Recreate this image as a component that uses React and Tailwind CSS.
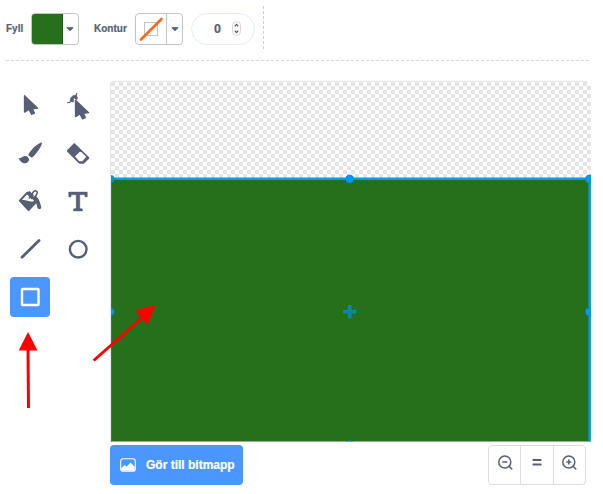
import React from "react";

const INK = "#575e75";

const Caret = () => (
  <svg width="8" height="5" viewBox="0 0 8 5" className="block">
    <path d="M1 .7h6L4 3.7z" fill={INK} stroke={INK} strokeWidth="1" strokeLinejoin="round" />
  </svg>
);

function Swatch({ children }) {
  return (
    <div className="flex h-8 w-12 overflow-hidden rounded-[4px] border border-[#c4c4c4]">
      <div className="flex w-[30px] items-center justify-center">{children}</div>
      <div className="flex flex-1 items-center justify-center border-l border-[#c4c4c4] pt-px">
        <Caret />
      </div>
    </div>
  );
}

function Header() {
  return (
    <div className="ml-[6px] flex h-[61px] w-[584px] items-start pt-[6px]">
      <div className="flex h-[45px] w-[258px] items-center">
        <span className="w-[24.5px] text-[10px] font-bold [-webkit-text-stroke:0.2px]">Fyll</span>
        <div className="flex h-8 w-12 overflow-hidden rounded-[4px] border border-[#c4c4c4]">
          <div className="-my-px -ml-px w-8 rounded-l-[4px] border border-[#1f6114] bg-[#26701b]" />
          <div className="flex flex-1 items-center justify-center pt-px">
            <Caret />
          </div>
        </div>
        <span className="ml-[15.5px] w-[41px] text-[10px] font-bold [-webkit-text-stroke:0.2px]">Kontur</span>
        <Swatch>
          <svg width="28" height="28" viewBox="0 0 28 28">
            <rect x="7.5" y="7.5" width="13" height="13" fill="none" stroke="#c4c4c4" />
            <path d="M4 24.5 24.5 4" stroke="#ff661a" strokeWidth="2.6" strokeLinecap="round" />
          </svg>
        </Swatch>
        <div className="ml-2 flex h-8 w-16 items-center rounded-full border border-[#e6edf7] pl-[22px]">
          <span className="w-[18px] pt-px text-[12.5px] font-bold [-webkit-text-stroke:0.2px]">0</span>
          <svg width="9" height="15" viewBox="0 0 9 15">
            <rect x=".5" y=".5" width="8" height="14" rx="4" fill="#fff" stroke="#d5d5d5" />
            <path d="m2.7 5.3 1.8-2 1.8 2M2.7 9.7l1.8 2 1.8-2" fill="none" stroke="#4c4c4c" strokeWidth="1.1" />
          </svg>
        </div>
      </div>
      <svg width="1" height="45" className="-ml-px">
        <path d="M.5 0v45" stroke="#d0d0d0" strokeDasharray="3 2" />
      </svg>
    </div>
  );
}

const Pointer = ({ x, y }) => (
  <path
    transform={`translate(${x} ${y})`}
    d="M.5.8V17.2l4.5-2.8 2.5 4.9 2.9-1.2-2-4.3 5.2-.6z"
    fill={INK}
    stroke={INK}
    strokeWidth="1.3"
    strokeLinejoin="round"
  />
);

const tools = [
  <Pointer key="p" x={14} y={10} />,
  <g key="r" fill="none" stroke={INK}>
    <path d="M12.3 16.2c-.4-3.3 2-6.2 5.7-6l1.5 2.3-1.3 4-3 .4z" fill={INK} strokeWidth=".8" />
    <path d="M9 17.8c1.6 0 3-.4 4-1.5M17.5 11.5c1-1 1.3-2.2 1.3-3.5" strokeWidth="1.1" />
    <path d="M17.4 16v13l4-2.5 9.100-2z" stroke="#fff" strokeWidth="3.2" />
    <Pointer x={17} y={14.5} />
  </g>,
  <g key="b" fill={INK} transform="translate(.5 1)">
    <path d="M18 20.300c2-4 7.400-9.500 12-11.600.9-.4 1.700.4 1.300 1.300-1.600 4.600-6 10.600-9.500 13.300-.6.4-1.200.3-1.700-.2l-1.900-1.600c-.4-.4-.4-.8-.2-1.200z" />
    <path d="M8.600 24.100c1.700.4 2.300-.5 3.500-1.300 2.600-1.700 5.800-.5 6.300 2 .6 3-2.200 5-5.300 4.400-2.100-.4-3.600-2.300-4.800-4.400-.3-.4-.1-.8.3-.7z" />
  </g>,
  <g key="e">
    <path d="m9.300 17 6.200-6.300c.5-.5 1.100-.5 1.600 0L30.900 24c.6.6.6 1.100 0 1.700l-4.300 4.400c-.4.4-.8.6-1.400.6h-3.400c-.5 0-.9-.2-1.300-.6L9.300 18.700c-.6-.6-.6-1.100 0-1.700z" fill={INK} />
    <path d="m17 23.500 4.500-4.600q1.200-.5 2.200.3l4.500 4.500-3.700 4.600h-3.300z" fill="#fff" />
  </g>,
  <g key="f">
    <path d="m9.400 18.700 6.900-7.500c.7-.7 1.400-.6 2.200-.1l9.300 9.600-8.300 8.800c-.7.7-1.200.7-1.900 0l-8.200-8.900c-.7-.7-.7-1.200 0-1.900z" fill={INK} />
    <path d="m12 19 5.400-6 6.700 6.700c-3.800 2.400-7.100-1.300-12.100-.7z" fill="#fff" />
    <path d="m17.300 12.400 5 5.700M19 17.500l4.500-6.700c1.400-1.900 4.300-.8 3.700 1.300l-2.700 5.300" fill="none" stroke={INK} strokeWidth="1.5" />
    <path d="m17 11.800 2.400-1.700 4.600 4.200c4.300 1.800 5.800 5.500 7.200 11.500.5 2.600-2.900 3.300-3.700 1-.7-2-.7-5.400-3.800-8.300z" fill={INK} />
    <path d="m23.600 15.600 2-3.700" stroke="#fff" strokeWidth=".8" />
  </g>,
  <path key="t" d="M10.700 11h18.600v5h-2.100l-.6-2.200h-4.800v13.400l2.700.7V30h-9v-2.100l2.700-.7V13.800h-4.800l-.6 2.200h-2.100z" fill={INK} stroke={INK} strokeWidth=".4" />,
  <path key="l" d="M12 28.300 29 11.400" stroke={INK} strokeWidth="2.800" strokeLinecap="round" />,
  <circle key="c" cx="20.200" cy="20.200" r="8.300" fill="none" stroke={INK} strokeWidth="2.400" />,
  <rect key="s" x="12" y="12" width="16.500" height="16" rx=".6" fill="none" stroke="#fff" strokeWidth="2.400" />,
];

function Toolbox() {
  return (
    <div className="ml-[10px] mt-1 grid w-[88px] grid-cols-[40px_40px] content-start gap-2">
      {tools.map((icon, i) => (
        <div key={i} className={i === 8 ? "h-10 w-10 rounded-[4px] bg-[#4c97ff]" : "h-10 w-10"}>
          <svg width="40" height="40" viewBox="0 0 40 40">{icon}</svg>
        </div>
      ))}
    </div>
  );
}

function Canvas() {
  return (
    <svg width="481" height="361" viewBox="110 81 481 361" className="block">
      <defs>
        <pattern id="checks" x="111" y="82" width="8" height="8" patternUnits="userSpaceOnUse">
          <path d="M0 0h4v4H0zM4 4h4v4H4z" fill="#e5e5e5" />
        </pattern>
        <clipPath id="stage"><rect x="111" y="82" width="480" height="359.5" /></clipPath>
      </defs>
      <path d="M110.5 442V84q0-2.5 2.5-2.5H587" fill="none" stroke="#e5e7ec" />
      <g clipPath="url(#stage)">
        <rect x="111" y="82" width="480" height="97" fill="url(#checks)" />
        <rect x="111" y="179" width="479" height="263" fill="#26701b" />
        <path d="M111.300 179V442" stroke="#1789a0" strokeWidth=".8" />
        <path d="M111 178.800H589.700V442" fill="none" stroke="#009cec" strokeWidth="2.500" />
        <g fill="#009cec" stroke="#0c83b5" strokeWidth=".6">
          <circle cx="110.500" cy="179" r="3.700" />
          <circle cx="349.700" cy="179" r="4" />
          <circle cx="589.500" cy="179" r="4" />
          <circle cx="110.500" cy="311.700" r="3.700" />
          <circle cx="589.500" cy="311.700" r="4" />
          <circle cx="349.700" cy="444.500" r="4" />
        </g>
        <path d="M348.500 305.500h2.500v5h5v2.500h-5v5h-2.500v-5h-5v-2.500h5z" fill="#1e8080" stroke="#078bc5" />
      </g>
    </svg>
  );
}

function ZoomIcon({ plus }) {
  return (
    <svg width="16" height="16" viewBox="0 0 16 16" fill="none" stroke={INK} strokeWidth="1.500" strokeLinecap="round">
      <circle cx="7.800" cy="7" r="6" />
      <path d="m12.300 11.500 2.500 2.500M5.800 7h4" />
      {plus && <path d="M7.800 5v4" />}
    </svg>
  );
}

function Footer() {
  return (
    <div className="mt-[3px] flex w-[476px] justify-between">
      <button className="flex h-[39.5px] w-[132.5px] items-center rounded-[4px] bg-[#4c97ff] pl-[10px] text-[12px] font-bold text-white [-webkit-text-stroke:0.2px]">
        <svg width="16" height="14" viewBox="0 0 16 14" className="mr-[10px]">
          <rect x=".7" y=".7" width="14.600" height="12.600" rx="2.600" fill="none" stroke="#fff" strokeWidth="1.100" />
          <path d="M1.200 10.200 4.700 7l2 1.800 3.800-4.200 4.300 4.300v2.500q0 1.400-1.400 1.400H2.600q-1.400 0-1.400-1.400z" fill="#fff" />
        </svg>
        <span className="whitespace-nowrap">Gör till bitmapp</span>
      </button>
      <div className="flex h-10 w-[98px] divide-x divide-[#dedede] rounded-[4px] border border-[#dedede]">
        <div className="flex flex-1 justify-center pt-[9px]"><ZoomIcon /></div>
        <div className="flex flex-1 justify-center pt-[9px]">
          <svg width="16" height="16" viewBox="0 0 16 16">
            <path d="M4.300 5h7.400M4.300 9.500h7.400" stroke={INK} strokeWidth="1.900" strokeLinecap="round" />
          </svg>
        </div>
        <div className="flex flex-1 justify-center pt-[9px]"><ZoomIcon plus /></div>
      </div>
    </div>
  );
}

export default function App() {
  return (
    <div className="relative h-[494px] w-[603px] overflow-hidden bg-white font-['Liberation_Sans',sans-serif] text-[#575e75]">
      <Header />
      <svg width="584" height="1" className="-mt-px ml-[6px] block">
        <path d="M0 .5h584" stroke="#d9d9d9" strokeDasharray="3 2" />
      </svg>
      <main className="mt-5 flex">
        <Toolbox />
        <div className="ml-3">
          <Canvas />
          <Footer />
        </div>
      </main>
      <svg className="pointer-events-none absolute inset-0" width="603" height="494">
        <g fill="#f00" stroke="#f00">
          <path d="M28.500 408 28 349" strokeWidth="3" />
          <path d="M28 332 37.500 350.500H18.700z" stroke="none" />
          <path d="M93.700 360.500 143 317" strokeWidth="3" />
          <path d="M155.500 305 147.500 325 135 310.500z" stroke="none" />
        </g>
      </svg>
    </div>
  );
}
